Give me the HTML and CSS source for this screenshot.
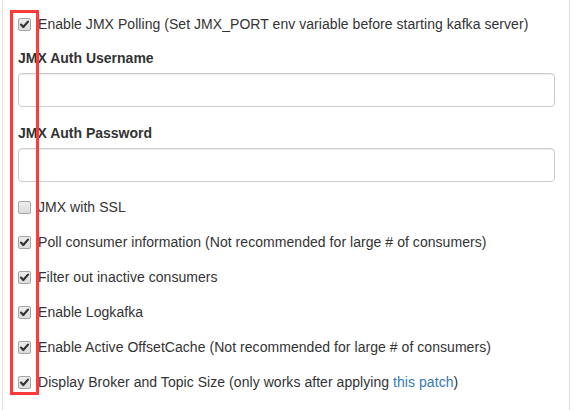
FILE: index.html
```html
<!DOCTYPE html>
<html>
<head>
<meta charset="utf-8">
<link rel="stylesheet" href="styles.css">
</head>
<body>
<div class="panel">
  <form class="form">
    <label class="check"><span class="box"><svg viewBox="0 0 13 13" width="13" height="13"><path d="M3 6.6 L5.3 9 L10 3.6" fill="none" stroke="#333" stroke-width="2.2" stroke-linecap="round" stroke-linejoin="round"/></svg></span>Enable JMX Polling (Set JMX_PORT env variable before starting kafka server)</label>
    <div class="group g-user">
      <div class="field-label">JMX Auth Username</div>
      <div class="input"></div>
    </div>
    <div class="group g-pass">
      <div class="field-label">JMX Auth Password</div>
      <div class="input"></div>
    </div>
    <label class="check"><span class="box"></span>JMX with SSL</label>
    <label class="check"><span class="box"><svg viewBox="0 0 13 13" width="13" height="13"><path d="M3 6.6 L5.3 9 L10 3.6" fill="none" stroke="#333" stroke-width="2.2" stroke-linecap="round" stroke-linejoin="round"/></svg></span>Poll consumer information (Not recommended for large # of consumers)</label>
    <label class="check"><span class="box"><svg viewBox="0 0 13 13" width="13" height="13"><path d="M3 6.6 L5.3 9 L10 3.6" fill="none" stroke="#333" stroke-width="2.2" stroke-linecap="round" stroke-linejoin="round"/></svg></span>Filter out inactive consumers</label>
    <label class="check"><span class="box"><svg viewBox="0 0 13 13" width="13" height="13"><path d="M3 6.6 L5.3 9 L10 3.6" fill="none" stroke="#333" stroke-width="2.2" stroke-linecap="round" stroke-linejoin="round"/></svg></span>Enable Logkafka</label>
    <label class="check"><span class="box"><svg viewBox="0 0 13 13" width="13" height="13"><path d="M3 6.6 L5.3 9 L10 3.6" fill="none" stroke="#333" stroke-width="2.2" stroke-linecap="round" stroke-linejoin="round"/></svg></span>Enable Active OffsetCache (Not recommended for large # of consumers)</label>
    <label class="check"><span class="box"><svg viewBox="0 0 13 13" width="13" height="13"><path d="M3 6.6 L5.3 9 L10 3.6" fill="none" stroke="#333" stroke-width="2.2" stroke-linecap="round" stroke-linejoin="round"/></svg></span>Display Broker and Topic Size (only works after applying&nbsp;<a href="#" class="link">this patch</a>)</label>
  </form>
  <div class="highlight"></div>
</div>
</body>
</html>
```

FILE: styles.css
```css
html, body {
  margin: 0;
  padding: 0;
  background: #fff;
}
body {
  font-family: "Liberation Sans", Arial, sans-serif;
  font-size: 14px;
  line-height: 20px;
  color: #333;
  height: 410px;
  overflow: hidden;
}
.panel {
  position: relative;
  margin-left: 2px;
  width: 568px;
  height: 410px;
  border-left: 1px solid #ddd;
  border-right: 1px solid #ddd;
  padding: 14px 14px 0 15px;
  box-sizing: border-box;
}
.form {
  display: flex;
  flex-direction: column;
  gap: 15px;
}
.check {
  display: flex;
  align-items: center;
  height: 20px;
  white-space: nowrap;
  letter-spacing: 0.05px;
}
.box {
  width: 13px;
  height: 13px;
  box-sizing: border-box;
  border: 1px solid #a6a6a6;
  border-radius: 2px;
  background: linear-gradient(#ececec, #dcdcdc);
  margin-right: 7px;
  flex: none;
  position: relative;
}
.box svg {
  position: absolute;
  left: -1px;
  top: -1px;
}
.group {
  display: flex;
  flex-direction: column;
  gap: 5px;
}
.g-user {
  margin-top: -1px;
}
.g-pass {
  margin-top: 1px;
}
.field-label {
  font-weight: 700;
  height: 20px;
}
.input {
  height: 34px;
  box-sizing: border-box;
  border: 1px solid #ccc;
  border-radius: 4px;
  background: #fff;
  box-shadow: inset 0 1px 1px rgba(0,0,0,0.075);
}
.link {
  color: #337ab7;
  text-decoration: none;
}
.highlight {
  position: absolute;
  left: 7px;
  top: 10px;
  width: 29px;
  height: 385px;
  box-sizing: border-box;
  border: 3px solid #ff3a3a;
}
```
